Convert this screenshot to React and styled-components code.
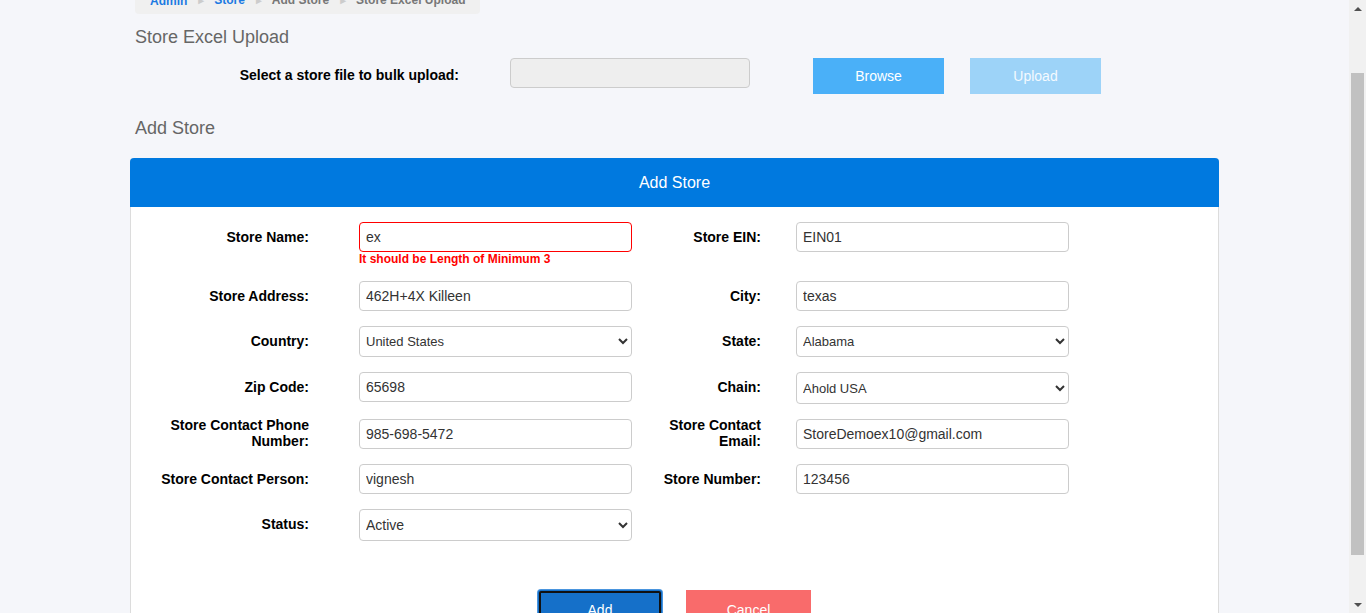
import React from 'react'
import styled, { createGlobalStyle, css } from 'styled-components'

const GlobalStyle = createGlobalStyle`
  body {
    margin: 0;
    background: #f5f6fa;
    font-family: "Liberation Sans", Arial, sans-serif;
    color: #333;
    overflow: hidden;
  }
`

const Window = styled.div`
  display: flex;
  height: 100vh;
`

const Viewport = styled.main`
  flex: 1;
  min-width: 0;
  overflow: hidden;
  background: #f5f6fa;
`

const ScrollBar = styled.div`
  width: 17px;
  display: flex;
  flex-direction: column;
  background: #f1f1f1;
`

const ScrollArrow = styled.div`
  height: 17px;
  display: flex;
  align-items: center;
  justify-content: center;
`

const ScrollTrack = styled.div`
  flex: 1;
  display: flex;
  flex-direction: column;
  padding: 0 2px;
`

const ScrollThumb = styled.div`
  background: #c1c1c1;
`

const TopBar = styled.div`
  height: 50px;
`

const Page = styled.div`
  max-width: 1089px;
  margin: 0 auto;
  padding: 5px 0 15px;
`

const Breadcrumb = styled.ol`
  display: inline-flex;
  align-items: center;
  list-style: none;
  margin: 0 5px;
  padding: 10px 15px 6px;
  background: #f0f0f0;
  border-radius: 4px;
  font-size: 12px;
  line-height: 14px;
  font-weight: bold;

  & > li + li::before {
    content: '►';
    color: #ccc;
    font-size: 10px;
    padding: 0 8px 0 9px;
  }
`

const Crumb = styled.li`
  color: ${p => (p.$link ? '#1c7ae2' : '#777')};
`

const Title = styled.h4`
  margin: ${p => p.$top}px 0 0;
  padding: 0 5px;
  font-size: 18px;
  line-height: 20px;
  font-weight: normal;
  color: #666;
`

const UploadRow = styled.div`
  display: flex;
  align-items: flex-start;
  margin-top: 11px;
  height: 36px;
`

const UploadLabel = styled.label`
  width: 329px;
  margin-right: 51px;
  padding-top: 7px;
  text-align: right;
  font-size: 14px;
  line-height: 20px;
  font-weight: bold;
  color: #000;
`

const FileBox = styled.div`
  box-sizing: border-box;
  width: 240px;
  height: 30px;
  margin-right: 63px;
  background: #eeeeee;
  border: 1px solid #cccccc;
  border-radius: 4px;
`

const UploadActions = styled.div`
  display: flex;
  gap: 26px;
`

const buttonTone = {
  browse: css`
    background: #4ab0f8;
    color: #fff;
  `,
  upload: css`
    background: #9dd3f8;
    color: #f4faff;
  `,
  add: css`
    background: #1570c9;
    color: #fff;
    outline: 2px solid #111;
    outline-offset: -3px;
    border-radius: 3px;
    box-shadow: 0 0 0 1px #4a95de;
  `,
  cancel: css`
    background: #f96b6b;
    color: #fff;
  `,
}

const Button = styled.button`
  box-sizing: border-box;
  width: ${p => p.$width || 131}px;
  height: ${p => p.$height || 36}px;
  border: none;
  padding: 0;
  font-family: "Liberation Sans", Arial, sans-serif;
  font-size: 14px;
  ${p => buttonTone[p.$tone]}
`

const Card = styled.section`
  margin-top: 20px;
  background: #fff;
  border: 1px solid #dcdcdc;
  border-top: none;
  border-radius: 4px 4px 0 0;
`

const CardHeader = styled.header`
  height: 49px;
  margin: 0 -1px;
  display: flex;
  align-items: center;
  justify-content: center;
  background: #0079df;
  color: #fff;
  font-size: 16px;
  border-radius: 4px 4px 0 0;
`

const CardBody = styled.div`
  padding: 15px 0 20px;
`

const FormGrid = styled.div`
  display: grid;
  grid-template-columns: 228px 273px 164px 273px;
  align-items: start;
  row-gap: 15px;
`

const FieldLabel = styled.label`
  box-sizing: border-box;
  height: 30px;
  display: flex;
  align-items: center;
  justify-content: flex-end;
  text-align: right;
  padding-right: ${p => (p.$right ? 35 : 50)}px;
  padding-left: ${p => (p.$right ? 8 : 0)}px;
  font-size: 14px;
  line-height: 16px;
  font-weight: bold;
  color: #000;

  > span {
    margin-top: ${p => (p.$twoLine ? -3 : 0)}px;
  }
`

const fieldBase = css`
  box-sizing: border-box;
  width: 273px;
  margin: 0;
  background: #fff;
  border: 1px solid ${p => (p.$invalid ? '#f00' : '#cccccc')};
  border-radius: 4px;
  font-family: "Liberation Sans", Arial, sans-serif;
  color: #333;
`

const TextInput = styled.input`
  ${fieldBase}
  height: 30px;
  padding: 0 6px;
  font-size: 14px;
  outline: none;
`

const Select = styled.select`
  ${fieldBase}
  height: ${p => p.$height || 31}px;
  padding: 0 2px;
  font-size: ${p => p.$size || 13}px;
`

const ErrorText = styled.div`
  font-size: 12px;
  line-height: 14px;
  font-weight: bold;
  color: #f00;
`

const ButtonRow = styled.div`
  display: flex;
  justify-content: center;
  gap: 24px;
  margin-top: 49px;
`

const fields = [
  [
    { label: 'Store Name:', value: 'ex', invalid: true, error: 'It should be Length of Minimum 3' },
    { label: 'Store EIN:', value: 'EIN01' },
  ],
  [
    { label: 'Store Address:', value: '462H+4X Killeen' },
    { label: 'City:', value: 'texas' },
  ],
  [
    { label: 'Country:', select: ['United States', 'Canada', 'Mexico'] },
    { label: 'State:', select: ['Alabama', 'Alaska', 'Arizona', 'Texas'] },
  ],
  [
    { label: 'Zip Code:', value: '65698' },
    { label: 'Chain:', select: ['Ahold USA', 'Kroger', 'Walmart'], height: 32 },
  ],
  [
    { label: 'Store Contact Phone Number:', value: '985-698-5472', twoLine: true },
    { label: 'Store Contact Email:', value: 'StoreDemoex10@gmail.com', twoLine: true },
  ],
  [
    { label: 'Store Contact Person:', value: 'vignesh' },
    { label: 'Store Number:', value: '123456' },
  ],
  [
    { label: 'Status:', select: ['Active', 'Inactive'], size: 14, height: 32 },
    null,
  ],
]

function Field ({ field }) {
  if (field.select) {
    return (
      <Select defaultValue={field.select[0]} $size={field.size} $height={field.height}>
        {field.select.map(o => <option key={o}>{o}</option>)}
      </Select>
    )
  }
  return (
    <div>
      <TextInput defaultValue={field.value} $invalid={field.invalid} />
      {field.error && <ErrorText>{field.error}</ErrorText>}
    </div>
  )
}

// browser scrollbar, scrolled a little way down
function FakeScrollBar () {
  return (
    <ScrollBar>
      <ScrollArrow>
        <svg width="8" height="4" viewBox="0 0 8 4"><path d="M0 4 L4 0 L8 4 Z" fill="#505050" /></svg>
      </ScrollArrow>
      <ScrollTrack>
        <div style={{ flex: 56 }} />
        <ScrollThumb style={{ flex: 482 }} />
        <div style={{ flex: 41 }} />
      </ScrollTrack>
      <ScrollArrow>
        <svg width="8" height="4" viewBox="0 0 8 4"><path d="M0 0 L8 0 L4 4 Z" fill="#505050" /></svg>
      </ScrollArrow>
    </ScrollBar>
  )
}

export default function App () {
  const viewRef = React.useRef(null)

  React.useLayoutEffect(() => {
    if (viewRef.current) viewRef.current.scrollTop = 72
  }, [])

  return (
    <>
      <GlobalStyle />
      <Window>
        <Viewport ref={viewRef}>
          <TopBar />
          <Page>
            <Breadcrumb>
              <Crumb $link>Admin</Crumb>
              <Crumb $link>Store</Crumb>
              <Crumb>Add Store</Crumb>
              <Crumb>Store Excel Upload</Crumb>
            </Breadcrumb>

            <Title $top={13}>Store Excel Upload</Title>
            <UploadRow>
              <UploadLabel>Select a store file to bulk upload:</UploadLabel>
              <FileBox />
              <UploadActions>
                <Button $tone="browse">Browse</Button>
                <Button $tone="upload" disabled>Upload</Button>
              </UploadActions>
            </UploadRow>

            <Title $top={24}>Add Store</Title>
            <Card>
              <CardHeader>Add Store</CardHeader>
              <CardBody>
                <FormGrid>
                  {fields.map((row, i) => (
                    <React.Fragment key={i}>
                      {row.map((field, j) => field ? (
                        <React.Fragment key={j}>
                          <FieldLabel $right={j === 1} $twoLine={field.twoLine}>
                            <span>{field.label}</span>
                          </FieldLabel>
                          <Field field={field} />
                        </React.Fragment>
                      ) : (
                        <React.Fragment key={j}>
                          <div />
                          <div />
                        </React.Fragment>
                      ))}
                    </React.Fragment>
                  ))}
                </FormGrid>
                <ButtonRow>
                  <Button $tone="add" $width={124} $height={40}>Add</Button>
                  <Button $tone="cancel" $width={125} $height={40}>Cancel</Button>
                </ButtonRow>
              </CardBody>
            </Card>
          </Page>
        </Viewport>
        <FakeScrollBar />
      </Window>
    </>
  )
}
